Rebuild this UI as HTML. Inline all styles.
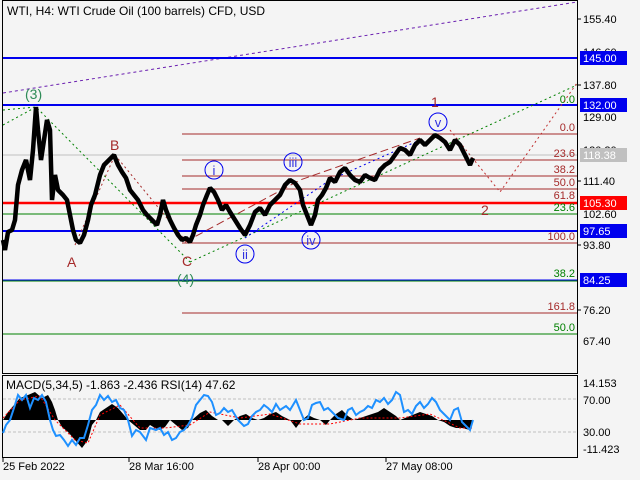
<!DOCTYPE html>
<html><head><meta charset="utf-8"><style>
body{margin:0;background:#f4f4f4;width:640px;height:480px;overflow:hidden;font-family:"Liberation Sans",sans-serif}
svg{position:absolute;left:0;top:0}
</style></head><body>
<svg width="640" height="480" viewBox="0 0 640 480" font-family="Liberation Sans, sans-serif" font-size="11">
<defs>
<polyline id="pr" fill="none" stroke-linejoin="bevel" points="3,240 5,250 8,232 12,230 15,220 18,185 22,170 26,160 30,180 33,150 36,107 38,130 41,160 44,140 47,120 50,130 52,200 55,175 58,190 63,195 67,200 70,215 73,230 76,240 80,243 84,235 88,220 91,205 95,195 100,175 104,165 109,160 114,155 118,165 122,172 126,178 130,190 134,195 138,200 143,210 147,215 152,220 157,225 160,215 163,200 166,210 170,220 174,228 178,235 182,240 186,238 190,242 193,235 196,225 200,215 203,205 207,195 210,188 214,192 218,200 222,210 226,205 230,212 235,220 240,228 245,235 250,225 255,212 260,208 265,215 270,205 275,200 280,195 285,185 290,180 295,183 300,190 303,205 307,215 311,225 315,215 318,200 322,195 326,188 330,178 335,182 340,172 345,168 350,175 355,180 360,182 365,175 370,178 375,180 380,170 385,165 390,162 395,155 400,148 405,150 410,155 415,145 420,140 425,145 430,140 435,135 440,138 445,142 450,150 455,140 460,145 465,155 470,165 473,158"/>
</defs>
<rect width="640" height="480" fill="#f4f4f4"/>
<rect x="2.5" y="0.5" width="575" height="373" fill="none" stroke="#000"/>
<rect x="2.5" y="375.5" width="575" height="82" fill="none" stroke="#000"/>
<text x="7" y="15" font-size="12">WTI, H4:  WTI Crude Oil (100 barrels) CFD, USD</text>
<line x1="3" y1="93" x2="577" y2="2" stroke="#6a1fb0" stroke-dasharray="3,3"/>
<line x1="3" y1="58" x2="577" y2="58" stroke="#0000ee" stroke-width="2"/>
<line x1="3" y1="105" x2="577" y2="105" stroke="#0000ee" stroke-width="2"/>
<line x1="3" y1="155" x2="577" y2="155" stroke="#c0c0c0"/>
<g stroke="#a52a2a">
<line x1="182" y1="134" x2="577" y2="134"/>
<line x1="182" y1="160" x2="577" y2="160"/>
<line x1="182" y1="176" x2="577" y2="176"/>
<line x1="182" y1="189" x2="577" y2="189"/>
<line x1="182" y1="243" x2="577" y2="243"/>
<line x1="182" y1="313" x2="577" y2="313"/>
</g>
<line x1="3" y1="203" x2="577" y2="203" stroke="#ff0000" stroke-width="2.5"/>
<line x1="3" y1="214" x2="577" y2="214" stroke="#008000"/>
<line x1="3" y1="231" x2="577" y2="231" stroke="#0000ee" stroke-width="2"/>
<line x1="3" y1="280" x2="577" y2="280" stroke="#0000ee" stroke-width="1"/>
<line x1="3" y1="281" x2="577" y2="281" stroke="#008000" stroke-width="1"/>
<line x1="3" y1="334" x2="577" y2="334" stroke="#008000"/>
<g text-anchor="end" font-size="11">
<text x="575" y="103" fill="#008000">0.0</text>
<text x="575" y="131" fill="#a52a2a">0.0</text>
<text x="575" y="157" fill="#a52a2a">23.6</text>
<text x="575" y="173" fill="#a52a2a">38.2</text>
<text x="575" y="186" fill="#a52a2a">50.0</text>
<text x="575" y="199" fill="#a52a2a">61.8</text>
<text x="575" y="211" fill="#008000">23.6</text>
<text x="575" y="240" fill="#a52a2a">100.0</text>
<text x="575" y="277" fill="#008000">38.2</text>
<text x="575" y="310" fill="#a52a2a">161.8</text>
<text x="575" y="331" fill="#008000">50.0</text>
</g>
<g fill="none" stroke-dasharray="2,3">
<polyline points="3,125 36,107" stroke="#008000"/>
<polyline points="3,110 36,107 190,262" stroke="#008000"/>
<polyline points="190,262 577,85" stroke="#008000"/>
<polyline points="115,155 185,240" stroke="#a52a2a"/>
<polyline points="75,245 115,155" stroke="#a52a2a"/>
<polyline points="450,130 470,155 500,192 577,83" stroke="#c03030"/>
<polyline points="245,238 330,180 420,140" stroke="#0000ee"/>
</g>
<g fill="none" stroke="#a52a2a" stroke-dasharray="8,4">
<polyline points="185,242 300,180 420,138"/>
</g>
<use href="#pr" stroke="#000" stroke-width="4.5"/>
<g font-size="14">
<text x="25" y="99" fill="#2e8b57">(3)</text>
<text x="110" y="150" fill="#a52a2a">B</text>
<text x="67" y="267" fill="#a52a2a">A</text>
<text x="182" y="266" fill="#a52a2a">C</text>
<text x="177" y="284" fill="#2e8b57">(4)</text>
<text x="431" y="107" fill="#a52a2a">1</text>
<text x="481" y="215" fill="#a52a2a">2</text>
</g>
<g fill="none" stroke="#0000ee"><circle cx="214" cy="170" r="9"/><circle cx="245" cy="254" r="9"/><circle cx="293" cy="162" r="9"/><circle cx="311" cy="240" r="9"/><circle cx="438" cy="122" r="9"/></g>
<g fill="#3030e0" font-size="13" text-anchor="middle"><text x="214" y="175">i</text><text x="245" y="259">ii</text><text x="293" y="167">iii</text><text x="311" y="245">iv</text><text x="438" y="127">v</text></g>
<g font-size="11" fill="#000">
<text x="583" y="23">155.40</text><text x="583" y="56">146.60</text><text x="583" y="89">137.80</text><text x="583" y="121">129.00</text><text x="583" y="154">120.20</text><text x="583" y="185">111.40</text><text x="583" y="218">102.60</text><text x="583" y="249">93.80</text><text x="583" y="314">76.20</text><text x="583" y="345">67.40</text>
</g>
<g stroke="#000"><line x1="577" y1="19" x2="581" y2="19"/><line x1="577" y1="85" x2="581" y2="85"/><line x1="577" y1="181" x2="581" y2="181"/><line x1="577" y1="245" x2="581" y2="245"/><line x1="577" y1="310" x2="581" y2="310"/></g>
<rect x="580" y="51" width="47" height="14" fill="#0000ee"/><text x="583" y="62" fill="#fff">145.00</text>
<rect x="580" y="98" width="47" height="14" fill="#0000ee"/><text x="583" y="109" fill="#fff">132.00</text>
<rect x="580" y="148" width="47" height="14" fill="#c0c0c0"/><text x="583" y="159" fill="#fff">118.38</text>
<rect x="580" y="196" width="47" height="14" fill="#ff0000"/><text x="583" y="207" fill="#fff">105.30</text>
<rect x="580" y="224" width="47" height="14" fill="#0000ee"/><text x="583" y="235" fill="#fff">97.65</text>
<rect x="580" y="273" width="47" height="14" fill="#0000ee"/><text x="583" y="284" fill="#fff">84.25</text>
<line x1="3" y1="399" x2="577" y2="399" stroke="#c0c0c0" stroke-dasharray="3,2"/>
<line x1="3" y1="432" x2="577" y2="432" stroke="#c0c0c0" stroke-dasharray="3,2"/>
<path fill="#000" d="M3,420 L8,412 14,405 20,398 28,395 35,392 42,398 48,395 52,402 55,410 58,420 62,427 68,432 75,440 82,448 88,440 92,425 96,420 100,412 106,408 112,404 118,408 124,415 128,420 134,425 140,430 146,430 150,425 155,428 160,430 165,427 170,420 176,425 182,430 188,428 192,420 200,413 206,410 212,416 218,420 222,420 228,426 234,420 240,416 246,414 252,418 258,420 264,418 270,414 276,412 282,416 290,420 296,428 302,420 308,415 314,418 320,420 326,425 330,420 336,414 342,410 348,416 354,420 360,418 366,416 372,414 378,412 384,408 390,412 396,416 400,420 405,418 410,416 415,414 420,412 426,414 432,416 438,420 444,422 450,426 456,428 462,428 470,430 472,420 Z"/>
<polyline fill="none" stroke="#ff0000" stroke-width="1" stroke-dasharray="2,2" points="3,418 20,400 40,396 55,420 75,440 88,443 100,415 120,405 140,428 165,428 190,425 210,412 240,418 270,414 300,424 330,424 360,418 400,418 430,414 460,428 472,428"/>
<polyline fill="none" stroke="#1e90ff" stroke-width="2" points="3,433 6,425 10,420 14,408 18,395 22,400 26,395 30,408 34,398 38,400 42,395 46,402 50,420 53,430 56,436 60,435 64,440 68,446 72,440 76,445 80,438 84,438 88,425 92,410 96,405 100,395 104,400 108,396 112,402 116,400 120,408 124,410 128,420 132,436 136,430 140,432 146,440 150,428 156,430 160,428 164,435 168,432 172,440 176,438 180,432 184,430 188,425 192,418 196,405 200,400 204,395 208,396 212,402 216,415 220,413 224,408 228,412 232,410 238,420 244,426 248,424 252,416 256,412 260,410 264,405 268,408 272,412 276,404 280,410 286,406 290,410 296,400 300,410 304,420 308,418 312,405 316,403 320,402 324,410 328,408 332,412 338,418 344,420 348,410 352,408 356,415 360,412 364,410 368,406 372,408 376,400 380,402 384,398 388,404 392,400 396,392 400,395 404,412 408,410 412,414 416,406 420,402 424,408 428,404 432,398 436,402 440,410 446,416 450,420 454,410 458,408 462,422 466,426 470,430 473,420"/>
<text x="6" y="389" font-size="12">MACD(5,34,5) -1.863 -2.436 RSI(14) 47.62</text>
<g font-size="11"><text x="583" y="387">14.153</text><text x="583" y="404">70.00</text><text x="583" y="436">30.00</text><text x="583" y="453">-11.423</text></g>
<g stroke="#000"><line x1="3" y1="457" x2="3" y2="462"/><line x1="129" y1="457" x2="129" y2="462"/><line x1="258" y1="457" x2="258" y2="462"/><line x1="386" y1="457" x2="386" y2="462"/></g>
<g font-size="11"><text x="3" y="470">25 Feb 2022</text><text x="129" y="470">28 Mar 16:00</text><text x="258" y="470">28 Apr 00:00</text><text x="386" y="470">27 May 08:00</text></g>
</svg>
</body></html>
